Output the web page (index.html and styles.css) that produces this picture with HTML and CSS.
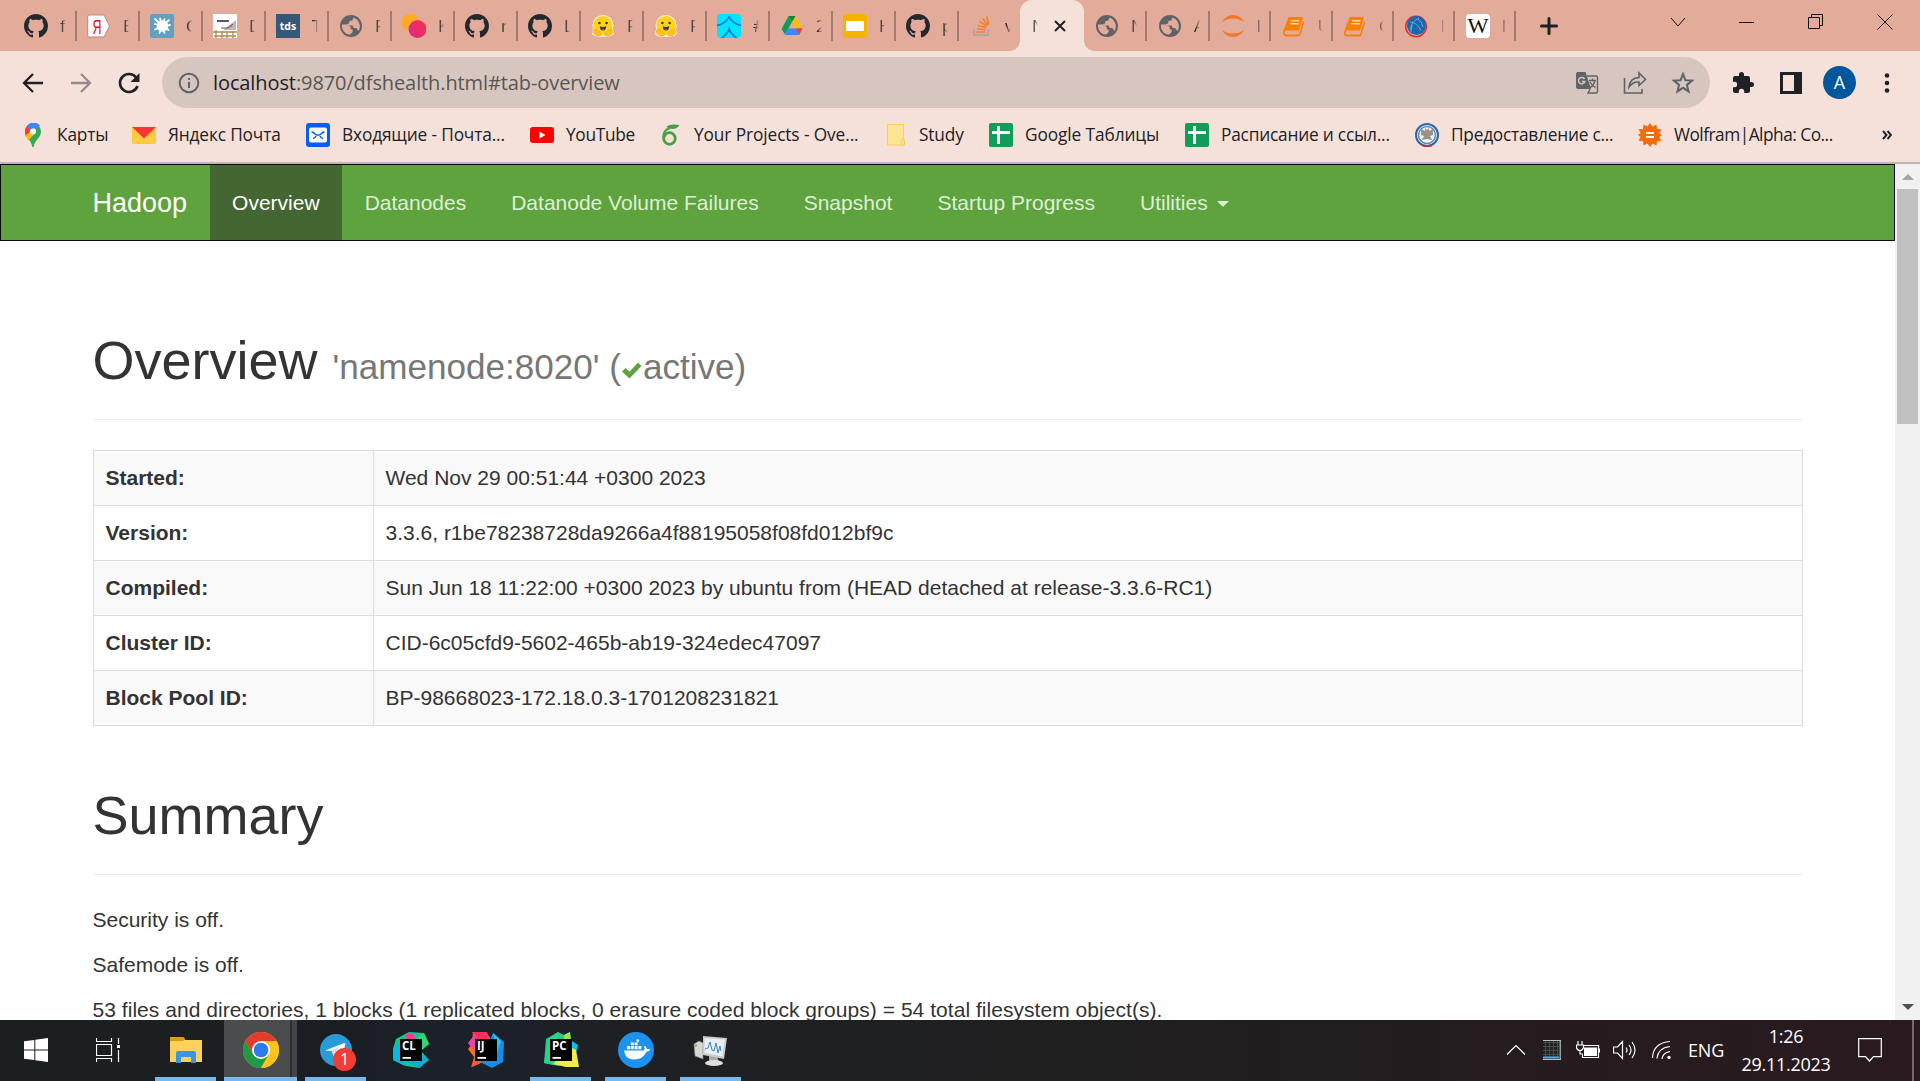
FILE: index.html
```html
<!DOCTYPE html>
<html lang="ru">
<head>
<meta charset="utf-8">
<title>Namenode information</title>
<link rel="stylesheet" href="styles.css">
</head>
<body>
<svg class="defs" aria-hidden="true">
  <symbol id="github" viewBox="0 0 16 16"><path fill="#24292e" d="M8 0C3.58 0 0 3.58 0 8c0 3.54 2.29 6.53 5.47 7.59.4.07.55-.17.55-.38 0-.19-.01-.82-.01-1.49-2.01.37-2.53-.49-2.69-.94-.09-.23-.48-.94-.82-1.13-.28-.15-.68-.52-.01-.53.63-.01 1.08.58 1.23.82.72 1.21 1.87.87 2.33.66.07-.52.28-.87.51-1.07-1.78-.2-3.64-.89-3.64-3.95 0-.87.31-1.59.82-2.15-.08-.2-.36-1.02.08-2.12 0 0 .67-.21 2.2.82.64-.18 1.32-.27 2-.27s1.36.09 2 .27c1.53-1.04 2.2-.82 2.2-.82.44 1.1.16 1.92.08 2.12.51.56.82 1.27.82 2.15 0 3.07-1.87 3.75-3.65 3.95.29.25.54.73.54 1.48 0 1.07-.01 1.93-.01 2.2 0 .21.15.46.55.38A8.01 8.01 0 0 0 16 8c0-4.42-3.58-8-8-8z"/></symbol>
  <symbol id="globe" viewBox="0 0 24 24"><circle cx="12" cy="12" r="11" fill="#5f6368"/><path fill="#e3ab9a" d="M3 10.500l5 0 3.500 2.300.4 2.700h1.700v2.400l-2.300 2.600C6 20.800 2.600 16 3 10.500zM14.500 3.400l-1.200 3.200-3 .3-.2 2.500-2.200.5.6 1.500 5.200.2 1 2.400 2.600.1 1.700 2.300.8.300c2.500-4.500.500-11.300-5.300-13.300z"/></symbol>
  <symbol id="hug" viewBox="0 0 24 24"><circle cx="12" cy="11.500" r="10.500" fill="#fff3df"/><path d="M1 20q0-6 4-6h14q4 0 4 6-3 3-11 3-9 0-11-3z" fill="#fff3df"/><circle cx="12" cy="11.500" r="9.600" fill="#ffd21e"/><path d="M2 18.500c.5-5 4-3 5.500-1l3 2.500c0 3-6 2.500-8.500-1.500zM22 18.500c-.5-5-4-3-5.500-1l-3 2.500c0 3 6 2.500 8.500-1.500z" fill="#ffc41c" stroke="#f09a1a" stroke-width=".6"/><circle cx="8.400" cy="9" r="1.300" fill="#3a3b45"/><circle cx="15.600" cy="9" r="1.300" fill="#3a3b45"/><path d="M8.800 12.300q3.200 1.500 6.400 0 0 4.200-3.200 4.200t-3.200-4.200z" fill="#3a3b45"/><path d="M10.500 15.500q1.500-1.200 3 0l-1.500.800z" fill="#f44"/></symbol>
  <symbol id="book" viewBox="0 0 24 24"><path fill="#f98000" d="M6.500 3H20q1 0 .7 1.200L17 16.500H4.500q-2 0-2 2t2 2H17l4-13.500q1.300.5 1 2L18.500 21q-.3 1.500-2 1.500H4Q.5 22 1 18z"/><path d="M9 6.800h8.500M8.200 9.800h8.500" stroke="#ffd8b0" stroke-width="1.500"/></symbol>
  <symbol id="sheet" viewBox="0 0 24 24"><rect width="24" height="24" rx="2" fill="#0f9d58"/><path d="M9.500 3v18M3 9.500h18" stroke="#fff" stroke-width="3"/></symbol>
</svg>

<header class="browser">
  <div class="tabs">
    <div class="tab"><svg class="ico"><use href="#github"/></svg><span class="title">f</span></div>
    <div class="tab"><svg class="ico" viewBox="0 0 24 24"><path d="M.7 2.500q0-1.500 1.500-1.500H17l5.500 11L17 23H2.200Q.7 23 .7 21.500z" fill="#fff" stroke="#b98a7c"/><text x="5.500" y="19.500" class="ya" textLength="9" lengthAdjust="spacingAndGlyphs">Я</text></svg><span class="title">E</span></div>
    <div class="tab"><svg class="ico" viewBox="0 0 24 24"><rect width="24" height="24" rx="2" fill="#61a0bf"/><circle cx="12.500" cy="12" r="5.800" fill="#fff"/><path d="M12.500 12L5 5M12.500 12L10 4.500M12.500 12l2-7M12.500 12l6.500-6M12.500 12l7.500-1M12.500 12l6 4M12.500 12l2 7M12.500 12l-3 7M12.500 12L5 15.500M12.500 12L5 10" stroke="#fff" stroke-width="1.800" stroke-linecap="round"/></svg><span class="title">C</span></div>
    <div class="tab"><svg class="ico" viewBox="0 0 24 24"><path fill="#fff" d="M0 0h24v24H0z"/><path d="M4 7h12" stroke="#222" stroke-width="1.500"/><path d="M10 16l13-10v10z" fill="#bbb"/><path d="M8 14h7l5-4" stroke="#555" fill="none"/><path d="M0 18h24M1 22h22M3 16v8M9 17v7M14 17v7M20 17v7" stroke="#a98f52" stroke-width="1.300"/><circle cx="18" cy="12" r="1.200" fill="#d55"/></svg><span class="title">D</span></div>
    <div class="tab"><svg class="ico" viewBox="0 0 24 24"><path fill="#355876" d="M0 0h24v24H0z"/><text x="12" y="15.500" class="tds">tds</text></svg><span class="title">T</span></div>
    <div class="tab"><svg class="ico"><use href="#globe"/></svg><span class="title">F</span></div>
    <div class="tab"><svg class="ico" viewBox="0 0 24 24"><defs><linearGradient id="pk" x1="0" y1="1" x2="1" y2="0"><stop stop-color="#d92a8c"/><stop offset="1" stop-color="#ff2e43"/></linearGradient></defs><circle cx="8.500" cy="8.500" r="8.800" fill="#ffab1e"/><circle cx="15.500" cy="15" r="9.800" fill="#e3ab9a"/><circle cx="15.500" cy="15" r="9" fill="url(#pk)"/></svg><span class="title">K</span></div>
    <div class="tab"><svg class="ico"><use href="#github"/></svg><span class="title">r</span></div>
    <div class="tab"><svg class="ico"><use href="#github"/></svg><span class="title">L</span></div>
    <div class="tab"><svg class="ico"><use href="#hug"/></svg><span class="title">F</span></div>
    <div class="tab"><svg class="ico"><use href="#hug"/></svg><span class="title">F</span></div>
    <div class="tab"><svg class="ico" viewBox="0 0 24 24"><rect width="24" height="24" rx="4" fill="#00e5ff"/><path d="M0 11.500q8-1.500 12-8.500 4 7 12 8.500M4.500 24q6-4 7.500-9 1.500 5 7.500 9" fill="none" stroke="#0a60f0" stroke-width="1.400"/></svg><span class="title">#</span></div>
    <div class="tab"><svg class="ico" viewBox="0 0 24 24"><path d="M8.500 2h7L12 8 5 20.500 1.500 15z" fill="#0f9d58"/><path d="M8.500 2h7l7 12.500H15.500z" fill="#fbbc04"/><path d="M8.500 2h7L12 8z" fill="#188038"/><path d="M8.300 14.500h14.200L19 21H5z" fill="#4285f4"/><path d="M15.800 14.500h6.700L19 21z" fill="#ea4335"/></svg><span class="title">2</span></div>
    <div class="tab"><svg class="ico" viewBox="0 0 24 24"><rect width="24" height="24" rx="2" fill="#f5b400"/><path fill="#fff" d="M3 7h18v10H3z"/></svg><span class="title">H</span></div>
    <div class="tab"><svg class="ico"><use href="#github"/></svg><span class="title">p</span></div>
    <div class="tab tab-before-active"><svg class="ico" viewBox="0 0 24 24"><path d="M5 15v6h14v-6" fill="none" stroke="#b3a59f" stroke-width="2"/><path d="M7.500 18h9M8 14.800l8.800.9M8.800 11.400l8.400 2.200M10.500 7.500l7.400 4.400M13.500 4.500l5.500 6.500M17.500 2.500l2.300 8" stroke="#f48024" stroke-width="1.600"/></svg><span class="title">v</span></div>
    <div class="tab tab-active"><span class="title">N</span><svg class="close" viewBox="0 0 12 12"><path d="M1 1l10 10M11 1L1 11" stroke="#202124" stroke-width="2"/></svg></div>
    <div class="tab"><svg class="ico"><use href="#globe"/></svg><span class="title">N</span></div>
    <div class="tab"><svg class="ico"><use href="#globe"/></svg><span class="title">A</span></div>
    <div class="tab tab-narrow"><svg class="ico" viewBox="0 0 24 24"><path d="M1 8Q5 1 12 1t11 7Q18 4.500 12 4.500T1 8zM1 16q4 7 11 7t11-7q-5 3.500-11 3.500T1 16z" fill="#f37726"/></svg><span class="title faded">I</span></div>
    <div class="tab tab-narrow"><svg class="ico"><use href="#book"/></svg><span class="title faded">U</span></div>
    <div class="tab tab-narrow"><svg class="ico"><use href="#book"/></svg><span class="title faded">C</span></div>
    <div class="tab tab-narrow"><svg class="ico" viewBox="0 0 24 24"><circle cx="12" cy="12.500" r="10.300" fill="#e3ab9a" stroke="#e02b35" stroke-width="1.500"/><circle cx="12.500" cy="11.500" r="9.500" fill="#1769ae"/><path d="M6 16q1-8 9-12M6 8q7 0 11 9M14 5q4 3 5 8M8 11l-1 7" stroke="#7fb7df" stroke-width=".8" fill="none"/></svg><span class="title faded">I</span></div>
    <div class="tab tab-narrow"><svg class="ico" viewBox="0 0 24 24"><rect width="24" height="24" rx="4" fill="#fff"/><text x="12" y="19" class="wiki" textLength="21" lengthAdjust="spacingAndGlyphs">W</text></svg><span class="title faded">I</span></div>
    <svg class="newtab" viewBox="0 0 18 18"><path d="M9 1.500v15M1.500 9h15" stroke="#202124" stroke-width="3" stroke-linecap="round"/></svg>
    <div class="window-buttons">
      <svg width="16" height="16" viewBox="0 0 16 16"><path d="M1 4l7 8 7-8"/></svg>
      <svg width="16" height="16" viewBox="0 0 16 16"><path d="M0 8.500h15"/></svg>
      <svg width="16" height="16" viewBox="0 0 16 16"><path d="M.5 3.500h11v11H.500zM3.500 3.500v-3h11v11h-3"/></svg>
      <svg width="16" height="16" viewBox="0 0 16 16"><path d="M.5.5l15 15M15.500.5l-15 15"/></svg>
    </div>
  </div>

  <div class="toolbar">
    <svg class="nav-ico" viewBox="0 0 24 24"><path d="M22 12H3M12 3l-9 9 9 9" fill="none" stroke="#202124" stroke-width="2.300"/></svg>
    <svg class="nav-ico dim" viewBox="0 0 24 24"><path d="M2 12h19M12 3l9 9-9 9" fill="none" stroke="#202124" stroke-width="2.300"/></svg>
    <svg class="nav-ico" viewBox="0 0 24 24"><path d="M19.500 7A9 9 0 1 0 20.500 15" fill="none" stroke="#202124" stroke-width="2.600"/><path d="M22.500 2v9h-9z" fill="#202124"/></svg>
    <div class="omnibox">
      <svg class="info" viewBox="0 0 22 22"><circle cx="11" cy="11" r="9.300" fill="none" stroke="#5f6368" stroke-width="2"/><path d="M11 10v6M11 6v2" stroke="#5f6368" stroke-width="2"/></svg>
      <span class="url"><b>localhost</b>:9870/dfshealth.html#tab-overview</span>
      <div class="omni-actions">
        <svg viewBox="0 0 24 24"><path d="M3 1h7.500l5.500 17H3q-2 0-2-2V3q0-2 2-2z" fill="#5f6368"/><path d="M12 5h9q1.500 0 1.500 1.500v14q0 1.500-1.500 1.500h-8l2-4M14 9.500h7M17.500 7.500v2M20 9.500q-1 5-5 7M15 11q2 4 5.500 5.500" fill="none" stroke="#5f6368" stroke-width="1.400"/><path d="M9.500 8A3.200 3.200 0 1 0 9.800 10.500H7" fill="none" stroke="#d7c6bf" stroke-width="1.500"/></svg>
        <svg viewBox="0 0 24 24"><path d="M1.500 7v15H19v-4M6 16q1-9 10-9.500V2l6.500 6.500L16 14.500V11q-6-.5-10 5z" fill="none" stroke="#5f6368" stroke-width="1.600"/></svg>
        <svg viewBox="0 0 24 24"><path d="M12 3l2.400 6.200 6.700.4-5.200 4.300 1.700 6.500L12 16.800l-5.600 3.600 1.700-6.500L2.900 9.600l6.700-.4z" fill="none" stroke="#5f6368" stroke-width="2"/></svg>
      </div>
    </div>
    <div class="toolbar-actions">
      <svg width="24" height="24" viewBox="0 0 24 24"><path fill="#202124" d="M20.500 11H19V7c0-1.100-.9-2-2-2h-4V3.500a2.500 2.500 0 0 0-5 0V5H4c-1.100 0-2 .9-2 2v3.800h1.500a2.700 2.700 0 0 1 0 5.400H2V20c0 1.100.9 2 2 2h3.800v-1.500a2.700 2.700 0 0 1 5.400 0V22H17c1.100 0 2-.9 2-2v-4h1.500a2.500 2.500 0 0 0 0-5z"/></svg>
      <svg width="22" height="22" viewBox="0 0 22 22"><path d="M0 0h22v22H0zM3 3v16h11V3z" fill="#202124" fill-rule="evenodd"/></svg>
      <span class="avatar">A</span>
      <svg width="6" height="20" viewBox="0 0 6 20"><g fill="#202124"><circle cx="3" cy="2.500" r="2.300"/><circle cx="3" cy="10" r="2.300"/><circle cx="3" cy="17.500" r="2.300"/></g></svg>
    </div>
  </div>

  <nav class="bookmarks">
    <a class="bm bm-maps"><svg class="ico" viewBox="0 0 24 24"><path d="M4 8.500a8 8 0 0 1 16 0C20 15 14 16 12.700 24h-1.400C10 16 4 15 4 8.500z" fill="#34a853"/><path d="M4 8.500A8 8 0 0 1 6 3l5 4-6 7Q4 11 4 8.500z" fill="#ea4335"/><path d="M6 3a8 8 0 0 1 13-.5L12 11z" fill="#4285f4"/><path d="M4.500 12.500L14 5l1 4-7.500 8.500Q5.500 15 4.500 12.500z" fill="#fbbc04"/><circle cx="12" cy="8.500" r="3" fill="#fff"/></svg>Карты</a>
    <a class="bm bm-yandex"><svg class="ico" viewBox="0 0 24 24"><path d="M0 4h24v17H0z" fill="#ffc93c"/><path d="M0 4l12 11.500L24 4z" fill="#ff3333"/><path d="M0 21l9-8.300M24 21l-9-8.300" stroke="#ffe08a" stroke-width=".6"/></svg>Яндекс Почта</a>
    <a class="bm bm-inbox"><svg class="ico" viewBox="0 0 24 24"><rect width="24" height="24" rx="3" fill="#005ff9"/><rect x="3" y="4.500" width="18" height="15" rx="2" fill="#fff"/><path d="M5.500 9q2 0 3.500 2 3 2.500 6 0 1.500-2 3.500-2M7 15.500q2-.3 3-2.500M17 15.500q-2-.3-3-2.500" fill="none" stroke="#005ff9" stroke-width="1.600"/></svg>Входящие - Почта...</a>
    <a class="bm bm-youtube"><svg class="ico" viewBox="0 0 24 24"><rect y="4" width="24" height="16" rx="3" fill="#f00"/><path d="M9.500 8.500v7l6-3.500z" fill="#fff"/></svg>YouTube</a>
    <a class="bm bm-projects"><svg class="ico" viewBox="0 0 24 24"><circle cx="11.500" cy="15.500" r="5.800" fill="none" stroke="#47a141" stroke-width="2.800"/><path d="M5.500 15Q5 7 12 5" fill="none" stroke="#47a141" stroke-width="2.300"/><path d="M8 4q4-3.500 13.500-2Q17 9 8 4z" fill="#47a141"/></svg>Your Projects - Ove...</a>
    <a class="bm bm-study"><svg class="ico" viewBox="0 0 24 24"><path d="M4.500 1.500h16V17h1v5h-17z" fill="#ffe591" stroke="#f7cf55"/><path d="M18.500 22v-5q1.500-2 3 0v5z" fill="#ffe591" stroke="#f7cf55"/></svg>Study</a>
    <a class="bm bm-sheets"><svg class="ico"><use href="#sheet"/></svg>Google Таблицы</a>
    <a class="bm bm-schedule"><svg class="ico"><use href="#sheet"/></svg>Расписание и ссыл...</a>
    <a class="bm bm-nalog"><svg class="ico" viewBox="0 0 24 24"><circle cx="12" cy="12" r="11" fill="#f4f1ee" stroke="#2e68a5" stroke-width="2"/><circle cx="12" cy="12" r="8.500" fill="none" stroke="#5c8abb" stroke-width="1.500"/><path d="M12 7l2-2v3l4-2v6l-3 1 2 4-5-1-5 1 2-4-3-1V6l4 2V5z" fill="#9a928c"/><path d="M7 21.500q5 2.500 10 0v1.500q-5 2-10 0z" fill="#d2232a"/></svg>Предоставление с...</a>
    <a class="bm bm-wolfram"><svg class="ico" viewBox="0 0 24 24"><path d="M12 0l2.500 3.500L18.500 1.500 19 6l4.500.3L21.300 10 24 12l-2.700 2 2.200 3.700L19 18l-.5 4.500-4-2L12 24l-2.500-3.500-4 2L5 18l-4.500-.3L2.700 14 0 12l2.700-2L.5 6.300 5 6l.5-4.500 4 2z" fill="#f96a04"/><path d="M8 10h8M8 14h8" stroke="#fff" stroke-width="1.800"/></svg>Wolfram|Alpha: Co...</a>
    <svg class="more" viewBox="0 0 10 10"><path d="M1 1l3.500 4L1 9M5.500 1L9 5 5.500 9" fill="none" stroke="#202124" stroke-width="1.900"/></svg>
  </nav>
</header>

<div class="viewport">
  <div class="page">
    <nav class="navbar">
      <a class="brand">Hadoop</a>
      <a class="active">Overview</a>
      <a>Datanodes</a>
      <a>Datanode Volume Failures</a>
      <a>Snapshot</a>
      <a>Startup Progress</a>
      <a>Utilities<i class="caret"></i></a>
    </nav>
    <main class="container">
      <div class="page-header"><h1>Overview <small>'namenode:8020' (<svg class="ok" viewBox="0 0 21 17"><path d="M1 9.500l3.500-3.500 4 3.800L17 .5 20.500 4 8.500 16.500z" fill="#5fa33e"/></svg>active)</small></h1></div>
      <table>
        <tr><th>Started:</th><td>Wed Nov 29 00:51:44 +0300 2023</td></tr>
        <tr><th>Version:</th><td>3.3.6, r1be78238728da9266a4f88195058f08fd012bf9c</td></tr>
        <tr><th>Compiled:</th><td>Sun Jun 18 11:22:00 +0300 2023 by ubuntu from (HEAD detached at release-3.3.6-RC1)</td></tr>
        <tr><th>Cluster ID:</th><td>CID-6c05cfd9-5602-465b-ab19-324edec47097</td></tr>
        <tr><th>Block Pool ID:</th><td>BP-98668023-172.18.0.3-1701208231821</td></tr>
      </table>
      <div class="page-header"><h1>Summary</h1></div>
      <p>Security is off.</p>
      <p>Safemode is off.</p>
      <p class="totals">53 files and directories, 1 blocks (1 replicated blocks, 0 erasure coded block groups) = 54 total filesystem object(s).</p>
    </main>
  </div>
  <div class="scrollbar">
    <svg class="arrow" viewBox="0 0 12 6"><path d="M0 6l6-6 6 6z" fill="#a3a3a3"/></svg>
    <div class="thumb"></div>
    <svg class="arrow arrow-down" viewBox="0 0 12 6"><path d="M0 0h12L6 6z" fill="#505050"/></svg>
  </div>
</div>

<footer class="taskbar">
  <div class="apps">
    <span class="app app-start"><svg width="24" height="24" viewBox="0 0 24 24"><path d="M0 3.300L10.300 1.900v9.600H0zM11.300 1.700L24 0v11.500H11.300zM0 12.500h10.300v9.600L0 20.700zM11.300 12.500H24V24l-12.700-1.700z" fill="#fff"/></svg></span>
    <span class="app app-view"><svg width="24" height="24" viewBox="0 0 24 24"><path d="M.5 0v3.500h15V0M.5 24v-3.500h15V24M.5 6.500h15v11H.500zM22.500 0v6M22.500 12v12" fill="none" stroke="#fff" stroke-width="1.200"/><path d="M21 7h3v3h-3z" fill="#fff"/></svg></span>
    <span class="app open"><svg width="32" height="28" viewBox="0 0 32 28"><path d="M0 2q0-1 1-1h12l2 3H32v22H0z" fill="#fed05c"/><path d="M0 1h13l2 1.500-2 2.500H0z" fill="#e09b0a"/><path d="M6 27V17q0-2 2-2h16q2 0 2 2v10h-5v-6H11v6z" fill="#3a96dd"/></svg></span>
    <span class="app open app-chrome"><svg width="36" height="36" viewBox="0 0 36 36"><circle cx="18" cy="18" r="18" fill="#fbbc05"/><path d="M2.400 9A18 18 0 0 1 33.600 9H18L10.200 22.500z" fill="#e33b2e"/><path d="M2.400 9A18 18 0 0 0 18 36l7.800-13.500H10.200z" fill="#1f9a46"/><path d="M33.600 9A18 18 0 0 1 18 36l7.800-13.500L26 9z" fill="#fcc31e"/><circle cx="18" cy="18" r="9" fill="#fff"/><circle cx="18" cy="18" r="7.300" fill="#2b7bf0"/></svg></span>
    <span class="app open app-telegram"><svg width="32" height="32" viewBox="0 0 32 32"><circle cx="16" cy="16" r="16" fill="#2a9bd7"/><path d="M5 16.500L24.500 9q1-.2.800 1L22 24.500l-6-4.500-2.500 2.500-1.500-5.500z" fill="#fff"/><path d="M12 17l9-5.500-7 7-.5 4z" fill="#b9d9ec"/></svg><b class="badge">1</b></span>
    <span class="app"><svg width="36" height="36" viewBox="0 0 36 36"><path d="M3 7l13-7 15 1 5 11-8 7 8 9-10 8-13-2-13-6 0-11z" fill="#12c98b"/><path d="M0 17l8-8 4 25L0 28z" fill="#0bb6de"/><path d="M13 1l8 1 2 8-10-1z" fill="#ee3f93"/><path d="M13 30l14 6 8-9-8-5z" fill="#14a9d6"/><path d="M31 1l5 11-8 5-6-10z" fill="#32d774"/><path fill="#000" d="M7 7h22v22H7z"/><text class="jb" x="9" y="18">CL</text><path d="M9.500 25h8.500v1.800H9.500z" fill="#fff"/></svg></span>
    <span class="app"><svg width="36" height="36" viewBox="0 0 36 36"><path d="M5 0l14 1 6 10-12 20-9 4 2-10-6-8 4-5z" fill="#fa6b25"/><path d="M4 0l15 0 3 10-12 0z" fill="#fe315d"/><path d="M0 11l7-9 2 10-4 6z" fill="#f13fae"/><path d="M3 35l5-15 8 8z" fill="#fb5a3a"/><path d="M25 1l11 9-1 20-11 6-12-6z" fill="#178de9"/><path d="M25 1l8 8-4 12z" fill="#20c4f4"/><path fill="#000" d="M7 7h22v22H7z"/><text class="jb" x="9" y="18">IJ</text><path d="M9.500 25h8.500v1.800H9.500z" fill="#fff"/></svg></span>
    <span class="app open"><svg width="36" height="36" viewBox="0 0 36 36"><path d="M3 7L15 0l6 3 6-3 1 12-12 22L1 31z" fill="#28c98b"/><path d="M1 31l5-24 9-7-4 33z" fill="#21d789"/><path d="M29 9l6 4-2 8-5-2z" fill="#07c3f2"/><path d="M27 15l6 3 3 17-13 0-13-3z" fill="#f2ee45"/><path d="M21 3l6-3 1 9-7 0z" fill="#9ae04f"/><path fill="#000" d="M7 7h22v22H7z"/><text class="jb" x="9" y="18">PC</text><path d="M9.500 25h8.500v1.800H9.500z" fill="#fff"/></svg></span>
    <span class="app open"><svg width="36" height="36" viewBox="0 0 36 36"><circle cx="18" cy="18" r="18" fill="#1d91ee"/><path d="M6 18.500h20q1-2 0-4 1-1 2 .5.800 1 .8 2 2-.3 3.700.500-1 2-4 2.300Q25 27.500 16 27.500 7 27.500 6 18.500z" fill="#fff"/><path d="M9 14h3v3.300H9zM12.800 14h3v3.300h-3zM16.600 14h3v3.300h-3zM20.400 14h3v3.300h-3zM12.800 10.500h3v2.800h-3zM16.600 10.500h3v2.800h-3zM18.600 7.500h2.500v2.300h-2.500z" fill="#fff"/></svg></span>
    <span class="app open"><svg width="36" height="36" viewBox="0 0 36 36"><path d="M1 12l5-3 4 2v16l-8-3z" fill="#d5d5d5" stroke="#888" stroke-width=".6"/><circle cx="3" cy="13.500" r="1.200" fill="#53c72b"/><path d="M16 24h8l2 6h-10z" fill="#aaa"/><ellipse cx="21" cy="31" rx="9" ry="3" fill="#ddd"/><path d="M10 4l24 2-3 21-21-4z" fill="#c9c9c9"/><path d="M11.500 6l20.500 1.600-2.500 17-18-3.500z" fill="#e6eef3"/><path d="M12 17l3-1 2-6 2 8 2 1 2-8 2 10 2-7 1 5" fill="none" stroke="#3d85b8" stroke-width="1"/></svg></span>
  </div>
  <div class="tray">
    <svg class="t-chev" width="20" height="12" viewBox="0 0 20 12"><path d="M1 10.500l9-9 9 9"/></svg>
    <svg class="t-grid" width="18" height="20" viewBox="0 0 18 20"><path d="M0 0h18v20H0z" fill="#1d2021" stroke="none"/><path d="M0 2.500h16M0 6.500h16M0 10.500h16M0 14.500h16M2.500 0v17M6.500 0v17M10.500 0v17M14.500 0v17" class="mesh"/><path d="M0 17.500h16" class="level"/><path d="M0 .5h18M0 19.500h18M17.200 0v20" class="rim"/></svg>
    <svg class="t-bat" width="24" height="18" viewBox="0 0 24 18"><path d="M8 4.500h14.500v12h-16v-3"/><path d="M8 6.500h13v8.500H8zM22.500 7.500H24v4h-1.500z" fill="#fff" stroke="none"/><path d="M2 0v4M6 0v4M.5 4h7v2.500q-1 3-3.500 3-2.500 0-3.500-3zM4 9.500V13h3"/></svg>
    <svg class="t-vol" width="24" height="20" viewBox="0 0 24 20"><path d="M.5 7v6h4l5 5.500v-17L4.500 7zM13 7.500q2 2.500 0 5M16 5q4 5 0 10M19 2q6 8 0 16"/></svg>
    <svg class="t-wifi" width="20" height="20" viewBox="0 0 20 20"><path d="M.5 18Q1 3 18 1.500M5 18.500Q6 8 18 6.500M10 19q.5-6 8-7.500"/><circle cx="17" cy="17.500" r="1.700" fill="#fff" stroke="none"/></svg>
    <span class="lang">ENG</span>
    <span class="clock"><span>1:26</span><span>29.11.2023</span></span>
    <svg class="t-note" width="24" height="24" viewBox="0 0 24 24"><path d="M.7.700h22.600v18H15.500L11.500 23 7.500 18.700H.7z"/></svg>
    <i class="peek"></i>
  </div>
</footer>
</body>
</html>
```
FILE: styles.css
```css
* { box-sizing: border-box; }
body { margin: 0; width: 1920px; height: 1081px; overflow: hidden; display: flex; flex-direction: column; background: #fff; font-family: "Liberation Sans", Arial, sans-serif; }
svg { display: block; flex: none; }
.defs { display: none; }
.ico { width: 24px; height: 24px; }

.browser { height: 164px; flex: none; background: #f5e1da; border-bottom: 2px solid #c4b4ae; font-family: "Open Sans", sans-serif; color: #202124; }

/* tab strip */
.tabs { height: 51px; display: flex; align-items: center; padding-left: 14px; background: #e3ab9a; }
.tab { position: relative; width: 63px; height: 51px; flex: none; display: flex; align-items: center; gap: 12px; padding: 1px 0 0 10px; }
.tab::after { content: ""; position: absolute; right: 0; top: 11px; width: 2px; height: 30px; background: #a17b70; }
.title { width: 6px; overflow: hidden; font-size: 17px; line-height: 24px; white-space: nowrap; mask-image: linear-gradient(90deg, #000 20%, transparent); }
.faded { width: 4px; opacity: .7; }
.tab-before-active { width: 61px; }
.tab-before-active::after { display: none; }
.tab-active { width: 64px; padding-left: 12px; gap: 16px; background: #f5e1da; border-radius: 12px 12px 0 0; }
.tab-active::before, .tab-active::after { content: ""; position: absolute; top: auto; bottom: 0; width: 10px; height: 10px; }
.tab-active::before { left: -10px; background: radial-gradient(circle at 0 0, transparent 9.5px, #f5e1da 10px); }
.tab-active::after { right: -10px; background: radial-gradient(circle at 100% 0, transparent 9.5px, #f5e1da 10px); }
.tab-active + .tab, .tab-active + .tab + .tab { padding-left: 11px; }
.tab-narrow { width: 61.3px; padding-left: 10.500px; }
.close { width: 12px; height: 12px; }
.ya { font: 21px "Liberation Sans", sans-serif; fill: #e01010; }
.tds { font: bold 10.5px "Open Sans", sans-serif; fill: #fff; text-anchor: middle; }
.wiki { font: 20px "Liberation Serif", serif; fill: #111; text-anchor: middle; }
.newtab { width: 18px; height: 18px; margin-left: 24px; }
.window-buttons { display: flex; gap: 53px; margin: -8px 27px 0 auto; }
.window-buttons svg { fill: none; stroke: #111; stroke-width: 1; }

/* address row */
.toolbar { height: 63px; display: flex; align-items: center; padding-left: 21px; gap: 24px; }
.nav-ico { width: 24px; height: 24px; }
.dim { opacity: .45; }
.omnibox { width: 1548px; height: 51px; margin-left: -3px; border-radius: 26px; background: #d7c6bf; display: flex; align-items: center; padding: 0 15px 0 16px; }
.info { width: 22px; height: 22px; }
.url { margin-left: 13px; font-size: 20px; letter-spacing: -.1px; color: #5b5652; white-space: nowrap; }
.url b { font-weight: 400; color: #202124; }
.omni-actions { display: flex; gap: 24px; margin-left: auto; }
.omni-actions svg { width: 24px; height: 24px; }
.toolbar-actions { display: flex; align-items: center; gap: 22px; margin-left: -3px; }
.toolbar-actions svg:first-child { margin-right: 3px; }
.avatar { width: 33px; height: 33px; margin-left: -1px; border-radius: 50%; background: #01579b; color: #fff; font-size: 18px; line-height: 33px; text-align: center; }
.toolbar-actions svg:last-child { margin-left: 6px; }

/* bookmarks */
.bookmarks { height: 42px; display: flex; align-items: center; padding-left: 21px; font-size: 17.3px; letter-spacing: -.15px; line-height: 24px; }
.bm { display: flex; align-items: center; gap: 12px; flex: none; white-space: nowrap; }
.bm-maps { width: 111px; }
.bm-yandex { width: 174px; }
.bm-inbox { width: 224px; }
.bm-youtube { width: 128px; letter-spacing: -.3px; }
.bm-projects { width: 225px; letter-spacing: -.1px; }
.bm-study { width: 106px; }
.bm-sheets { width: 196px; letter-spacing: -.1px; }
.bm-schedule { width: 230px; letter-spacing: -.2px; }
.bm-nalog { width: 223px; letter-spacing: -.23px; }
.bm-wolfram { width: 244px; letter-spacing: -.5px; }
.more { width: 10px; height: 10px; }

/* page */
.viewport { height: 856px; flex: none; display: flex; overflow: hidden; }
.page { width: 1895px; color: #333; font-size: 21px; line-height: 30px; }
.navbar { height: 77px; border: 1px solid #080808; background: #5fa33e; display: flex; padding-left: 69px; }
.navbar a { padding: 22.5px; color: #dcf0d3; white-space: nowrap; }
.navbar .brand { font-size: 27px; color: #fff; }
.navbar .active { background: #446633; color: #fff; }
.caret { display: inline-block; margin-left: 9px; vertical-align: middle; border: 6px solid transparent; border-top-color: currentColor; border-bottom: 0; }
.container { padding: 30px 92px 0 92.5px; }
.page-header { margin: 60px 0 30px; padding-bottom: 13.5px; border-bottom: 1px solid #eee; }
h1 { margin: 0 0 15px; font-size: 54px; font-weight: 400; line-height: 59.5px; }
small { font-size: 35.1px; line-height: 1; color: #777; }
.ok { display: inline-block; width: 21px; height: 17px; margin-right: 1px; }
table { width: 100%; table-layout: fixed; border-collapse: collapse; }
th, td { height: 55px; padding: 0 12px; border: 1px solid #ddd; text-align: left; }
th { width: 280px; }
tr:nth-child(odd) { background: #f9f9f9; }
p { margin: 0 0 15px; }
.totals { letter-spacing: .04px; }

.scrollbar { width: 25px; background: #f1f1f1; display: flex; flex-direction: column; align-items: center; padding: 10px 0; }
.arrow { width: 12px; height: 6px; }
.thumb { width: 21px; height: 235px; margin-top: 9px; background: #c1c1c1; }
.arrow-down { margin-top: auto; }

/* taskbar */
.taskbar { height: 61px; flex: none; display: flex; justify-content: space-between; background: linear-gradient(90deg, #1c1f20 0, #1b1f24 18%, #1b212b 24%, #1e2023 32%, #1f1f20 55%, #261b1f 85%, #2a1a20 100%); color: #fff; font-family: "Open Sans", sans-serif; }
.apps { display: flex; gap: 14px; }
.app { position: relative; width: 61px; display: flex; align-items: center; justify-content: center; padding-bottom: 1px; }
.app-start { width: 72px; }
.app-view { width: 46px; margin-right: 10px; margin-left: -1px; }
.open { border-bottom: 4px solid #76b9ed; padding-top: 3px; }
.app-chrome { width: 73px; margin: 0 -6px; background: linear-gradient(90deg, #4a4c4e 66px, #2c2e30 66px, #2c2e30 68px, #434547 68px) padding-box; }
.badge { position: absolute; left: 28px; top: 28px; width: 23px; height: 23px; border-radius: 50%; background: #f23c34; font-size: 16px; font-weight: 400; line-height: 23px; text-align: center; }
.jb { font: bold 11.5px "Open Sans", sans-serif; fill: #fff; }
.tray { display: flex; align-items: center; padding-bottom: 1px; font-size: 18px; }
.tray svg { fill: none; stroke: #fff; stroke-width: 1.2; }
.t-grid { margin-left: 17px; }
.tray .mesh { stroke: #4a4c4e; }
.tray .level { stroke: #55aae5; stroke-width: 2; }
.tray .rim { stroke: #bbb; }
.t-bat { margin-left: 15px; }
.t-vol { margin-left: 13px; }
.t-wifi { margin-left: 15px; }
.lang { margin-left: 16px; width: 54px; letter-spacing: -.2px; }
.clock { width: 88px; display: flex; flex-direction: column; align-items: center; line-height: 28px; letter-spacing: -.3px; }
.t-note { margin-left: 28px; }
.peek { width: 2px; height: 61px; margin: 0 6px 0 30px; background: #75696d; }
```
